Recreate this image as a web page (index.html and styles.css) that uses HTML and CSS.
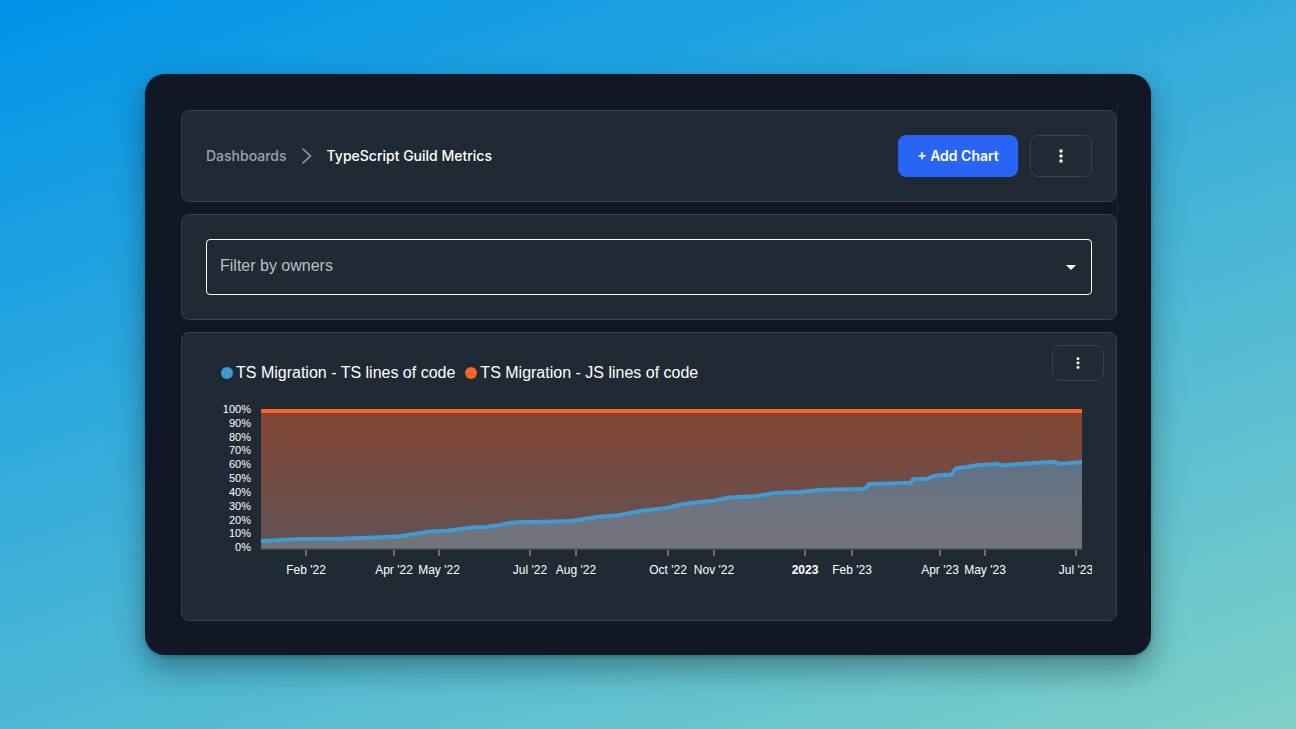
FILE: index.html
```html
<!DOCTYPE html>
<html lang="en">
<head>
<meta charset="utf-8">
<title>TypeScript Guild Metrics</title>
<link rel="stylesheet" href="styles.css">
</head>
<body>
<main class="window">
  <header class="card toolbar">
    <nav class="breadcrumb" aria-label="Breadcrumb">
      <a class="crumb" href="#">Dashboards</a>
      <svg class="chevron" viewBox="0 0 10 16" aria-hidden="true"><path d="M1 1L8.500 8L1 15"/></svg>
      <span class="crumb-current">TypeScript Guild Metrics</span>
    </nav>
    <div class="actions">
      <button class="btn btn-primary" type="button">+ Add Chart</button>
      <button class="btn btn-outline" type="button" aria-label="Dashboard menu">
        <svg class="dots" viewBox="0 0 16 16" aria-hidden="true"><circle cx="8" cy="3" r="1.700"/><circle cx="8" cy="8" r="1.700"/><circle cx="8" cy="13" r="1.700"/></svg>
      </button>
    </div>
  </header>

  <section class="card filters">
    <div class="select-wrap">
      <select class="select" aria-label="Filter by owners">
        <option>Filter by owners</option>
      </select>
      <svg class="caret" viewBox="0 0 10 5" aria-hidden="true"><path d="M0 0H10L5 5Z"/></svg>
    </div>
  </section>

  <section class="card chart-card">
    <div class="chart-head">
      <ul class="legend">
        <li class="legend-item"><span class="swatch swatch-ts"></span>TS Migration - TS lines of code</li>
        <li class="legend-item"><span class="swatch swatch-js"></span>TS Migration - JS lines of code</li>
      </ul>
      <button class="btn btn-outline btn-small" type="button" aria-label="Chart menu">
        <svg class="dots dots-small" viewBox="0 0 16 16" aria-hidden="true"><circle cx="8" cy="3" r="1.700"/><circle cx="8" cy="8" r="1.700"/><circle cx="8" cy="13" r="1.700"/></svg>
      </button>
    </div>
    <svg class="chart" viewBox="0 0 886 184" role="img" aria-label="Share of TypeScript and JavaScript lines of code">
      <defs>
        <linearGradient id="js" gradientUnits="userSpaceOnUse" x1="0" y1="11" x2="0" y2="149">
          <stop offset="0" stop-color="#834533"/><stop offset="1" stop-color="#615254"/>
        </linearGradient>
        <linearGradient id="ts" gradientUnits="userSpaceOnUse" x1="0" y1="62" x2="0" y2="149">
          <stop offset="0" stop-color="#5f7286"/><stop offset="0.500" stop-color="#6e7481"/><stop offset="1" stop-color="#737379"/>
        </linearGradient>
      </defs>
      <rect x="55" y="11" width="821" height="138" fill="url(#js)"/>
      <path fill="url(#ts)" d="M55 149V141L94 139L134 138.700L169 137.500L194 136.300L207 134.300L224 131.500L241 130.700L257 128.700L267 127.300L281 127L294 125L305 122.700L316 122L341 121.700L364 121L372 120L391 117L414 115L434 111L461 108L477 104L507 100.700L524 97.500L551 96L567 93.300L581 92.200L594 92L616 89.700L657 89L660 88L663 84L684 83.500L705 82.700L707 79.300L721 78.700L729 75.700L739 74.700L745 75L750 68.300L759 67.300L771 65.300L791 63.700L795 65.500L817 63.700L849 61.700L852 63.500L861 63.300L876 62V149Z"/>
      <path class="line-ts" d="M55 141L94 139L134 138.700L169 137.500L194 136.300L207 134.300L224 131.500L241 130.700L257 128.700L267 127.300L281 127L294 125L305 122.700L316 122L341 121.700L364 121L372 120L391 117L414 115L434 111L461 108L477 104L507 100.700L524 97.500L551 96L567 93.300L581 92.200L594 92L616 89.700L657 89L660 88L663 84L684 83.500L705 82.700L707 79.300L721 78.700L729 75.700L739 74.700L745 75L750 68.300L759 67.300L771 65.300L791 63.700L795 65.500L817 63.700L849 61.700L852 63.500L861 63.300L876 62"/>
      <path class="line-js" d="M55 11H876"/>
      <path class="axis" d="M55 149H876"/>
      <path class="ticks" d="M100 150V156M188 150V156M233 150V156M324 150V156M370 150V156M462 150V156M508 150V156M599 150V156M646 150V156M734 150V156M779 150V156M870 150V156"/>
      <g class="y-labels">
        <text x="45" y="13">100%</text>
        <text x="45" y="27">90%</text>
        <text x="45" y="41">80%</text>
        <text x="45" y="54">70%</text>
        <text x="45" y="68">60%</text>
        <text x="45" y="82">50%</text>
        <text x="45" y="96">40%</text>
        <text x="45" y="110">30%</text>
        <text x="45" y="124">20%</text>
        <text x="45" y="137">10%</text>
        <text x="45" y="151">0%</text>
      </g>
      <g class="x-labels">
        <text x="100" y="174">Feb '22</text>
        <text x="188" y="174">Apr '22</text>
        <text x="233" y="174">May '22</text>
        <text x="324" y="174">Jul '22</text>
        <text x="370" y="174">Aug '22</text>
        <text x="462" y="174">Oct '22</text>
        <text x="508" y="174">Nov '22</text>
        <text class="year" x="599" y="174">2023</text>
        <text x="646" y="174">Feb '23</text>
        <text x="734" y="174">Apr '23</text>
        <text x="779" y="174">May '23</text>
        <text x="870" y="174">Jul '23</text>
      </g>
    </svg>
  </section>
</main>
</body>
</html>
```
FILE: styles.css
```css
* { box-sizing: border-box; }

body {
  margin: 0;
  min-height: 100vh;
  padding: 74px 145px;
  background: #0093e9 linear-gradient(160deg, #0093e9 0%, #80d0c7 100%);
  font-family: "Liberation Sans", Arial, sans-serif;
  color: #fff;
}

.window {
  display: flex;
  flex-direction: column;
  gap: 12px;
  padding: 36px 34px 34px 36px;
  border-radius: 20px;
  background: #111724;
  box-shadow: 0 14px 32px rgba(0, 0, 0, 0.35), 0 2px 4px rgba(0, 0, 0, 0.2);
}

.card {
  border: 1px solid #374151;
  border-radius: 8px;
  background: #1f2a35;
}

.toolbar {
  display: flex;
  align-items: center;
  justify-content: space-between;
  padding: 24px;
}

.breadcrumb {
  display: flex;
  align-items: center;
  gap: 15px;
  font: 500 14px/20px Inter, sans-serif;
}

.crumb { color: #9ca3af; text-decoration: none; }
.crumb-current { color: #fff; }

.chevron {
  width: 10px;
  height: 16px;
  fill: none;
  stroke: #9ca3af;
  stroke-width: 1.5;
  stroke-linecap: round;
  stroke-linejoin: round;
}

.actions { display: flex; gap: 12px; }

.btn {
  display: flex;
  align-items: center;
  justify-content: center;
  height: 42px;
  border: 1px solid #374151;
  border-radius: 8px;
  background: transparent;
  color: #fff;
  font: 600 14px/20px Inter, sans-serif;
}

.btn-primary { width: 120px; padding: 0; border-color: #2965f5; background: #2965f5; }
.btn-outline { width: 62px; padding: 0; }
.btn-small { width: 52px; height: 36px; }

.dots { width: 16px; height: 16px; fill: #fff; }
.dots-small { width: 14px; height: 14px; }

.filters { padding: 24px; }
.select-wrap { position: relative; }

.select {
  display: block;
  width: 100%;
  height: 56px;
  padding: 0 40px 3px 13px;
  appearance: none;
  border: 1px solid #fff;
  border-radius: 4px;
  background: transparent;
  color: #bcbfc2;
  font: 16px/24px "Liberation Sans", Arial, sans-serif;
}

.caret {
  position: absolute;
  top: 26px;
  right: 16px;
  width: 10px;
  height: 5px;
  fill: #fff;
  pointer-events: none;
}

.chart-card { padding: 12px; }

.chart-head {
  display: flex;
  justify-content: space-between;
  margin-bottom: 17px;
}

.legend {
  display: flex;
  gap: 10px;
  margin: 0;
  padding: 18px 0 0 27px;
  list-style: none;
  font-size: 16px;
  line-height: 20px;
}

.legend-item { display: flex; align-items: center; gap: 3px; }
.swatch { width: 12px; height: 12px; border-radius: 50%; }
.swatch-ts { background: #419bd2; }
.swatch-js { background: #fb6424; }

.chart {
  display: block;
  width: calc(100% - 24px);
  margin: 0 12px 24px;
  overflow: hidden;
}

.line-ts { fill: none; stroke: #419bd2; stroke-width: 4; stroke-linejoin: round; }
.line-js { stroke: #fb6424; stroke-width: 4; }
.axis { stroke: #505761; stroke-width: 1; }
.ticks { stroke: #b5b8bc; stroke-width: 1; }
.y-labels { fill: #fff; font-size: 11px; text-anchor: end; }
.x-labels { fill: #fff; font-size: 12px; text-anchor: middle; }
.year { font-weight: 700; }
```
